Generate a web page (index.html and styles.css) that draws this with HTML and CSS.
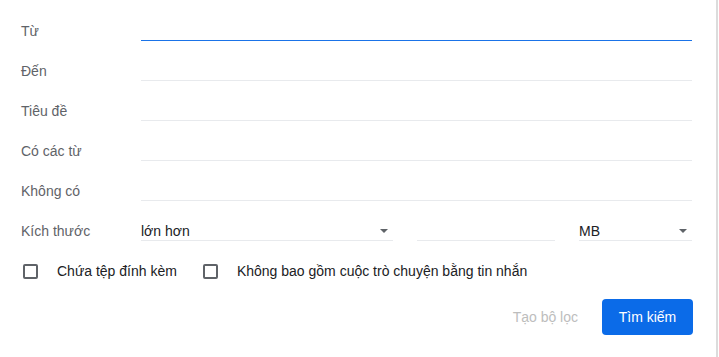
FILE: index.html
```html
<!DOCTYPE html>
<html lang="vi">
<head>
  <meta charset="UTF-8">
  <title>Tìm kiếm nâng cao</title>
  <link rel="stylesheet" href="styles.css">
</head>
<body>
  <div class="search-panel">
    <div class="row">
      <label class="label" for="from">Từ</label>
      <input class="field focused" id="from" type="text">
    </div>
    <div class="row">
      <label class="label" for="to">Đến</label>
      <input class="field" id="to" type="text">
    </div>
    <div class="row">
      <label class="label" for="subject">Tiêu đề</label>
      <input class="field" id="subject" type="text">
    </div>
    <div class="row">
      <label class="label" for="words">Có các từ</label>
      <input class="field" id="words" type="text">
    </div>
    <div class="row">
      <label class="label" for="without">Không có</label>
      <input class="field" id="without" type="text">
    </div>
    <div class="row">
      <span class="label">Kích thước</span>
      <div class="size-group">
        <div class="field select">
          <span>lớn hơn</span>
          <svg class="arrow" width="8" height="4" viewBox="0 0 8 4"><path d="M0 0h8L4 4z"/></svg>
        </div>
        <input class="field" type="text">
        <div class="field select">
          <span>MB</span>
          <svg class="arrow" width="8" height="4" viewBox="0 0 8 4"><path d="M0 0h8L4 4z"/></svg>
        </div>
      </div>
    </div>

    <div class="checks">
      <label class="check"><span class="box"></span>Chứa tệp đính kèm</label>
      <label class="check"><span class="box"></span>Không bao gồm cuộc trò chuyện bằng tin nhắn</label>
    </div>

    <div class="actions">
      <button class="btn-text" disabled>Tạo bộ lọc</button>
      <button class="btn-primary">Tìm kiếm</button>
    </div>
  </div>
</body>
</html>
```

FILE: styles.css
```css
body {
  margin: 0;
  background: #fff;
  font-family: "Liberation Sans", Arial, sans-serif;
  font-size: 14px;
  color: #202124;
}

.search-panel {
  width: 718px;
  height: 357px;
  box-sizing: border-box;
  padding: 1px 24px 0 21px;
  border-right: 2px solid #dcdcdc;
}

.row {
  display: grid;
  grid-template-columns: 120px 1fr;
  align-items: end;
  height: 40px;
}

.label {
  color: #5f6368;
  line-height: 20px;
}

.field {
  display: block;
  width: 100%;
  box-sizing: border-box;
  height: 22px;
  margin: 0;
  padding: 3px 0 0;
  border: none;
  border-bottom: 1px solid #e8eaed;
  font: inherit;
  color: #202124;
  line-height: 18px;
  outline: none;
  background: transparent;
}

.focused {
  border-bottom: 1px solid #1a73e8;
}

.size-group {
  display: grid;
  grid-template-columns: 252px 138px 1fr;
  column-gap: 24px;
  align-items: end;
}

.select {
  display: flex;
  align-items: center;
  justify-content: space-between;
  padding-right: 5px;
}

.arrow {
  fill: #5f6368;
}

.checks {
  display: flex;
  align-items: center;
  height: 40px;
  margin-top: 10px;
  gap: 24px;
}

.check {
  display: flex;
  align-items: center;
  gap: 19px;
  color: #202124;
}

.box {
  width: 15px;
  height: 15px;
  box-sizing: border-box;
  margin-left: 2px;
  border: 2px solid #5f6368;
  border-radius: 2px;
}

.actions {
  display: flex;
  justify-content: flex-end;
  margin-top: 8px;
  margin-right: -1px;
}

.actions button {
  height: 36px;
  font: inherit;
  border: none;
  border-radius: 4px;
  background: none;
}

.btn-text {
  padding: 0 24px;
  color: #bdbdbd;
}

.actions .btn-primary {
  width: 91px;
  padding: 0;
  background: #0b6be8;
  color: #fff;
  cursor: pointer;
}
```
